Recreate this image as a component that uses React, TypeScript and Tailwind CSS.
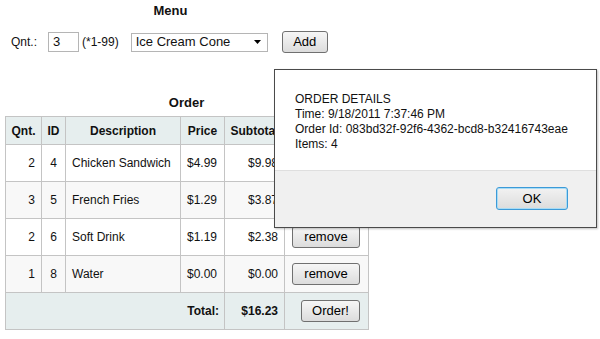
// Order page with a modal alert showing the order details

const items = [
  { qnt: 2, id: 4, desc: "Chicken Sandwich", price: "$4.99", subtotal: "$9.98" },
  { qnt: 3, id: 5, desc: "French Fries", price: "$1.29", subtotal: "$3.87" },
  { qnt: 2, id: 6, desc: "Soft Drink", price: "$1.19", subtotal: "$2.38" },
  { qnt: 1, id: 8, desc: "Water", price: "$0.00", subtotal: "$0.00" },
]

function GreyButton({ label, className }: { label: string; className: string }) {
  return (
    <div
      className={`flex items-center justify-center rounded-[3px] border border-[#707070] bg-gradient-to-b from-[#f6f6f6] to-[#dcdcdc] text-[13px] text-black ${className}`}
    >
      {label}
    </div>
  )
}

export default function App() {
  return (
    <div className="relative w-[600px] h-[339px] overflow-hidden bg-white text-[#111] font-['Liberation_Sans',Arial,sans-serif] text-[12px]">

      {/* Menu */}
      <div className="ml-[11px] w-[317px] pt-[3px]">
        <div className="text-center text-[13px] font-bold leading-[16px] pl-[2px]">Menu</div>
        <div className="mt-[12px] flex items-center h-[22px]">
          <span className="text-[12px]">Qnt.:</span>
          <div className="ml-[11px] w-[31px] h-[20px] border border-[#b5b5b5] flex items-center pl-[4px] text-[13px]">3</div>
          <span className="ml-[3px]">(*1-99)</span>
          <div className="ml-[12px] w-[137px] h-[19px] border border-[#b5b5b5] flex items-center pl-[4px] pr-[6px] text-[13px]">
            <span className="flex-1">Ice Cream Cone</span>
            <svg width="7" height="4" viewBox="0 0 7 4"><path d="M0 0h7L3.5 4z" fill="#000" /></svg>
          </div>
          <GreyButton label="Add" className="ml-[14px] w-[46px] h-[22px]" />
        </div>
      </div>

      {/* Order */}
      <div className="ml-[5px] w-[363px] mt-[42px]">
        <div className="text-center text-[13px] font-bold leading-[16px]">Order</div>
        <table className="mt-[5px] border-collapse w-[363px] table-fixed">
          <colgroup>
            <col className="w-[36px]" />
            <col className="w-[24px]" />
            <col className="w-[115px]" />
            <col className="w-[44px]" />
            <col className="w-[60px]" />
            <col className="w-[84px]" />
          </colgroup>
          <thead>
            <tr className="h-[28px] bg-[#e6eeee] font-bold">
              <th className="border border-[#c4c4c4] text-center">Qnt.</th>
              <th className="border border-[#c4c4c4] text-center">ID</th>
              <th className="border border-[#c4c4c4] text-center">Description</th>
              <th className="border border-[#c4c4c4] text-center">Price</th>
              <th className="border border-[#c4c4c4] text-center">Subtotal</th>
              <th className="border border-[#c4c4c4]"></th>
            </tr>
          </thead>
          <tbody>
            {items.map((it, i) => (
              <tr key={it.id} className={`h-[37px] ${i % 2 === 1 ? "bg-[#f8f8f8]" : "bg-white"}`}>
                <td className="border border-[#c4c4c4] text-right pr-[6px]">{it.qnt}</td>
                <td className="border border-[#c4c4c4] text-center">{it.id}</td>
                <td className="border border-[#c4c4c4] pl-[6px] whitespace-nowrap">{it.desc}</td>
                <td className="border border-[#c4c4c4] pl-[6px]">{it.price}</td>
                <td className="border border-[#c4c4c4] text-right pr-[6px]">{it.subtotal}</td>
                <td className="border border-[#c4c4c4]">
                  <div className="flex justify-end pr-[8px]">
                    <GreyButton label="remove" className="w-[68px] h-[22px]" />
                  </div>
                </td>
              </tr>
            ))}
            <tr className="h-[37px] bg-[#e6eeee] font-bold">
              <td colSpan={4} className="border border-[#c4c4c4] text-right pr-[5px]">Total:</td>
              <td className="border border-[#c4c4c4] text-right pr-[6px]">$16.23</td>
              <td className="border border-[#c4c4c4] font-normal">
                <div className="flex justify-end pr-[8px]">
                  <GreyButton label="Order!" className="w-[59px] h-[22px]" />
                </div>
              </td>
            </tr>
          </tbody>
        </table>
      </div>

      {/* Alert dialog */}
      <div className="absolute left-[274px] top-[69px] w-[323px] h-[159px] border border-[#4a4a4a] bg-white flex flex-col shadow-[1px_1px_2px_rgba(0,0,0,0.25)]">
        <div className="h-[100px] pl-[20px] pt-[22px] leading-[15px] text-[12px]">
          <div>ORDER DETAILS</div>
          <div>Time: 9/18/2011 7:37:46 PM</div>
          <div>Order Id: 083bd32f-92f6-4362-bcd8-b32416743eae</div>
          <div>Items: 4</div>
        </div>
        <div className="flex-1 bg-[#f0f0f0] border-t border-[#dfdfdf] flex justify-end pt-[16px] pr-[28px]">
          <div className="w-[72px] h-[23px] rounded-[3px] border border-[#3c9ad8] shadow-[0_0_0_1px_#a8dcf5_inset] bg-gradient-to-b from-[#f2f2f2] to-[#dcdcdc] flex items-center justify-center text-[13px] text-black">
            OK
          </div>
        </div>
      </div>

    </div>
  )
}
